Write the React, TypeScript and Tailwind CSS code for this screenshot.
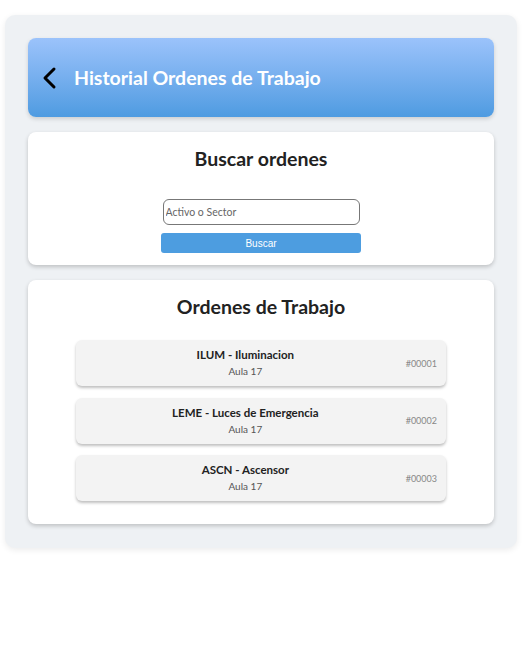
const ORDENES: Array<{ titulo: string; lugar: string; numero: string }> = [
  { titulo: 'ILUM - Iluminacion', lugar: 'Aula 17', numero: '#00001' },
  { titulo: 'LEME - Luces de Emergencia', lugar: 'Aula 17', numero: '#00002' },
  { titulo: 'ASCN - Ascensor', lugar: 'Aula 17', numero: '#00003' },
];

function IconoVolver() {
  return (
    <svg width="24" height="24" viewBox="0 0 24 24" fill="none" aria-hidden="true">
      <polyline points="15,3 6,12 15,21" stroke="#000" strokeWidth="3" strokeLinecap="round" strokeLinejoin="round" />
    </svg>
  );
}

export default function App() {
  return (
    <div className="min-h-[656px] bg-white px-[5px] pt-[15px] font-['Lato','Noto_Sans',sans-serif]">
      <div className="flex flex-col gap-[15px] rounded-[10px] bg-[#eef1f4] px-[23px] pt-[23px] pb-[24px] shadow-[0_2px_6px_rgba(0,0,0,0.08)]">
        {/* Cabecera */}
        <div className="flex h-[79px] items-center rounded-[8px] bg-gradient-to-b from-[#9bc3fb] to-[#4e9be1] pl-[11px] shadow-[0_2px_4px_rgba(0,0,0,0.15)]">
          <IconoVolver />
          <h1 className="ml-[11px] text-[19.5px] font-bold text-white">Historial Ordenes de Trabajo</h1>
        </div>

        {/* Buscador */}
        <div className="flex h-[133px] flex-col items-center rounded-[8px] bg-white pt-[12px] shadow-[0_2px_4px_rgba(0,0,0,0.2)]">
          <h2 className="text-[19.5px] font-bold text-[#222]">Buscar ordenes</h2>
          <input
            type="text"
            placeholder="Activo o Sector"
            className="mt-[26px] h-[26px] w-[197px] rounded-[6px] border border-[#777] px-[2px] text-[10.5px] placeholder:text-[#666] focus:outline-none"
          />
          <button
            type="button"
            className="mt-[8px] h-[20px] w-[200px] rounded-[3px] bg-[#4d9de0] font-['Liberation_Sans',sans-serif] text-[10px] text-white"
          >
            Buscar
          </button>
        </div>

        {/* Lista de ordenes */}
        <div className="flex flex-col items-center rounded-[8px] bg-white pt-[12px] pb-[23px] shadow-[0_2px_4px_rgba(0,0,0,0.2)]">
          <h2 className="text-[19.5px] font-bold text-[#222]">Ordenes de Trabajo</h2>
          <div className="mt-[19px] flex w-[370px] flex-col gap-[11.5px]">
            {ORDENES.map((o) => (
              <div
                key={o.numero}
                className="flex h-[46px] items-center rounded-[6px] bg-[#f3f3f3] pl-[9px] pr-[9px] shadow-[0_2px_3px_rgba(0,0,0,0.25)]"
              >
                <div className="flex flex-1 flex-col items-center">
                  <span className="text-[11.5px] font-bold leading-[16px] text-[#222]">{o.titulo}</span>
                  <span className="text-[10px] leading-[16px] text-[#555]">{o.lugar}</span>
                </div>
                <span className="text-[9px] text-[#888]">{o.numero}</span>
              </div>
            ))}
          </div>
        </div>
      </div>
    </div>
  );
}
